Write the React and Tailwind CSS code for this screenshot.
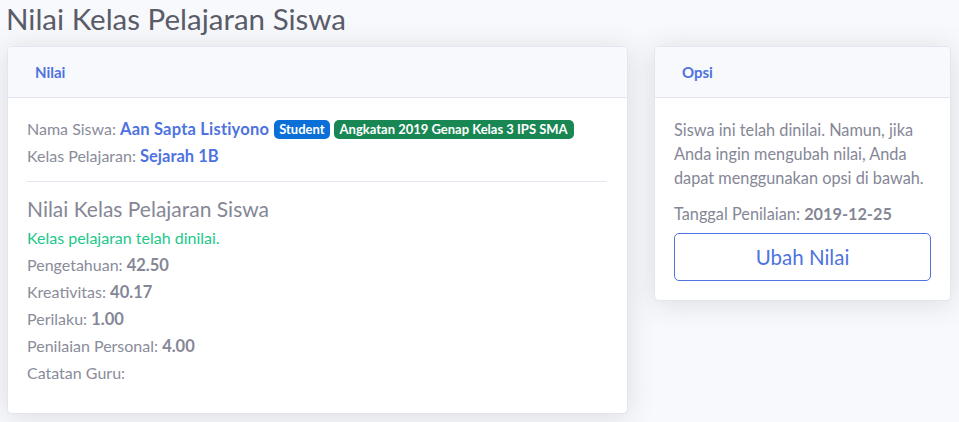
import React from 'react';

const Card = ({ title, width, children }) => (
    <div className={`${width} bg-white border border-[#e3e6f0] rounded-[5px] shadow-[0_0.15rem_1.75rem_0_rgba(58,59,69,0.15)] overflow-hidden`}>
        <div className="h-[51px] flex items-center px-[27px] bg-[#f8f9fc] border-b border-[#e3e6f0]">
            <h6 className="text-[15px] font-bold text-[#4e73df]">{title}</h6>
        </div>
        {children}
    </div>
);

// Fixed-height line: inline spans stay on one baseline
const Row = ({ label, value }) => (
    <div className="h-[27px] leading-[27px]">
        <span className="text-[#8a8c9a]">{label}: </span>
        {value && <span className="font-bold text-[16.5px]">{value}</span>}
    </div>
);

export default function App() {
    return (
        <div className="min-h-[422px] bg-[#f8f9fc] text-[#858796] font-['Lato','Noto_Sans',sans-serif] text-[16px]">
            <h1 className="pl-[6px] text-[29.5px] leading-[38px] text-[#5a5c69] font-normal">
                Nilai Kelas Pelajaran Siswa
            </h1>

            <div className="flex items-start gap-[26px] px-[7px] mt-[8px]">
                {/* ── Nilai ── */}
                <Card title="Nilai" width="w-[621px]">
                    <div className="pl-[19px] pr-[20px] pt-[17px] pb-[27px]">
                        <div className="h-[27px] leading-[27px]">
                            <span className="text-[#8a8c9a]">Nama Siswa: </span>
                            <span className="font-bold text-[16.5px] text-[#4e73df] tracking-[0.2px]">Aan Sapta Listiyono</span>
                            <span className="ml-[5px] inline-block align-[1px] px-[5px] h-[19px] leading-[19px] rounded-[5px] bg-[#0b6fd8] text-white text-[13px] font-bold">Student</span>
                            <span className="ml-[4px] inline-block align-[1px] px-[6px] h-[19px] leading-[19px] rounded-[5px] bg-[#198754] text-white text-[13px] font-bold">Angkatan 2019 Genap Kelas 3 IPS SMA</span>
                        </div>
                        <div className="h-[27px] leading-[27px]">
                            <span className="text-[#8a8c9a]">Kelas Pelajaran: </span>
                            <span className="font-bold text-[16.5px] text-[#4e73df]">Sejarah 1B</span>
                        </div>

                        <hr className="mt-[12px] mb-[12px] border-[#e3e6f0]" />

                        <h5 className="text-[21px] leading-[30px] font-normal">Nilai Kelas Pelajaran Siswa</h5>
                        <div className="h-[27px] leading-[27px] text-[#1cc88a]">Kelas pelajaran telah dinilai.</div>
                        <Row label="Pengetahuan" value="42.50" />
                        <Row label="Kreativitas" value="40.17" />
                        <Row label="Perilaku" value="1.00" />
                        <Row label="Penilaian Personal" value="4.00" />
                        <Row label="Catatan Guru" />
                    </div>
                </Card>

                {/* ── Opsi ── */}
                <Card title="Opsi" width="w-[297px]">
                    <div className="p-[19px] pt-[20px]">
                        <p className="leading-[24px] text-[16.3px]">
                            Siswa ini telah dinilai. Namun, jika Anda ingin mengubah nilai, Anda dapat menggunakan opsi di bawah.
                        </p>
                        <p className="leading-[24px] mt-[12px] text-[16.3px]">
                            Tanggal Penilaian: <span className="font-bold">2019-12-25</span>
                        </p>
                        <button className="mt-[7px] w-full h-[48px] rounded-[5px] border border-[#4e73df] text-[#4e73df] text-[20.5px]">
                            Ubah Nilai
                        </button>
                    </div>
                </Card>
            </div>
        </div>
    );
}
